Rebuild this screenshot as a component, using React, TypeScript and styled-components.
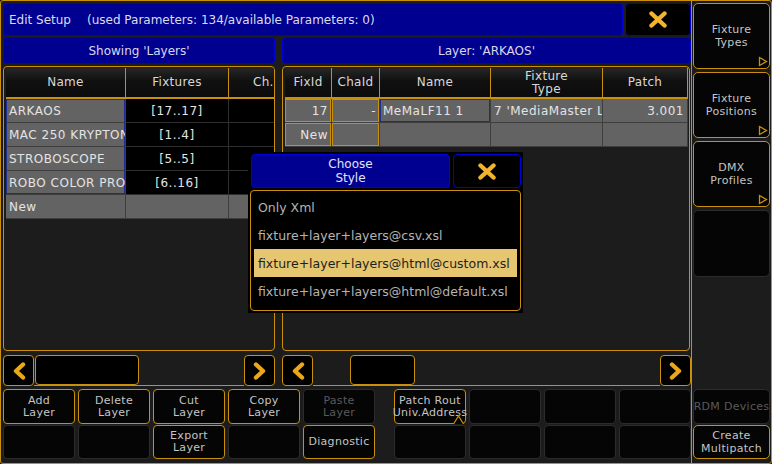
import React from 'react';
import styled, { createGlobalStyle } from 'styled-components';

const GOLD = '#c8900c';
const BLUE_BG = '#000090';
const BLUE_LINE = '#0000d8';

const GlobalStyle = createGlobalStyle`
  html, body {
    margin: 0;
    padding: 0;
    background: #1c1c1c;
  }
  body {
    font-family: "DejaVu Sans", "Liberation Sans", sans-serif;
  }
  * {
    box-sizing: border-box;
  }
`;

const Screen = styled.div`
  position: relative;
  width: 772px;
  height: 464px;
  border: 1px solid ${GOLD};
  border-radius: 3px;
  background: #1c1c1c;
  display: flex;
  overflow: hidden;
`;

const MainWindow = styled.div`
  position: relative;
  width: 691px;
  padding: 2px 0 0 2px;
  border-right: 1px solid ${GOLD};
  display: flex;
  flex-direction: column;
`;

// top title bar
const TopBar = styled.div`
  display: flex;
  gap: 2px;
  height: 33px;
  margin-bottom: 1px;
`;

const TitleBar = styled.div`
  flex: 1;
  display: flex;
  align-items: center;
  gap: 16px;
  padding-left: 5px;
  background: ${BLUE_BG};
  border: 1px solid ${BLUE_LINE};
  border-radius: 4px;
  color: #dcdcec;
  font-size: 12px;
`;

const CloseButton = styled.div<{ $w: number }>`
  width: ${(p) => p.$w}px;
  display: flex;
  align-items: center;
  justify-content: center;
  background: #000;
  border: 1px solid ${BLUE_LINE};
  border-radius: 4px;
`;

const Split = styled.div<{ $h: number; $mb: number }>`
  display: grid;
  grid-template-columns: 272px 1fr;
  column-gap: 7px;
  height: ${(p) => p.$h}px;
  margin-bottom: ${(p) => p.$mb}px;
`;

const SubHeader = styled.div`
  display: flex;
  align-items: center;
  justify-content: center;
  background: ${BLUE_BG};
  border: 1px solid ${BLUE_LINE};
  border-radius: 4px;
  color: #d8d8ec;
  font-size: 12px;
`;

const Panel = styled.div<{ $mr?: number }>`
  border: 1px solid ${GOLD};
  border-radius: 4px;
  padding: 1px 2px;
  margin-right: ${(p) => p.$mr || 0}px;
  overflow: hidden;
  background: #1c1c1c;
`;

const Table = styled.div<{ $cols: string }>`
  display: grid;
  grid-template-columns: ${(p) => p.$cols};
  grid-template-rows: 31px;
  grid-auto-rows: 24px;
  color: #e4e4e4;
  font-size: 12px;
  letter-spacing: 0.5px;
  white-space: nowrap;
`;

const HeadCell = styled.div<{ $align?: string }>`
  display: flex;
  align-items: center;
  justify-content: ${(p) => p.$align || 'center'};
  text-align: center;
  line-height: 13px;
  letter-spacing: 0.3px;
  padding: 0 4px;
  background: linear-gradient(#262626, #101010 45%, #0c0c0c);
  border-right: 1px solid ${GOLD};
  border-bottom: 2px solid ${GOLD};
  color: #d8d8d8;
  overflow: hidden;
`;

type Outline = 'none' | 'blueTop' | 'blueMid' | 'blueBottom' | 'blue' | 'gold';

const outlineShadow = (o: Outline) => {
  const b = '#1c2c98';
  switch (o) {
    case 'blueTop':
      return `inset 1px 0 ${b}, inset -1px 0 ${b}, inset 0 1px ${b}`;
    case 'blueMid':
      return `inset 1px 0 ${b}, inset -1px 0 ${b}`;
    case 'blueBottom':
      return `inset 1px 0 ${b}, inset -1px 0 ${b}, inset 0 -1px ${b}`;
    case 'blue':
      return `inset 0 0 0 1px #1c2c98`;
    case 'gold':
      return `inset 0 0 0 1px ${GOLD}`;
    default:
      return 'none';
  }
};

const Cell = styled.div<{ $gray?: boolean; $align?: string; $outline?: Outline }>`
  display: flex;
  align-items: center;
  justify-content: ${(p) => p.$align || 'flex-start'};
  padding: 0 3px;
  overflow: hidden;
  background: ${(p) => (p.$gray ? '#636363' : '#000')};
  border-right: 1px solid ${(p) => (p.$gray ? '#3e3e3e' : '#2e2e2e')};
  border-bottom: 1px solid ${(p) => (p.$gray ? '#3e3e3e' : '#2e2e2e')};
  box-shadow: ${(p) => outlineShadow(p.$outline || 'none')};
`;

// scrollbars
const ScrollBar = styled.div`
  display: flex;
  height: 31px;
`;

const ArrowBtn = styled.div`
  width: 31px;
  flex: none;
  display: flex;
  align-items: center;
  justify-content: center;
  background: #000;
  border: 1px solid ${GOLD};
  border-radius: 4px;
`;

const Track = styled.div`
  flex: 1;
  display: flex;
  border-bottom: 1px solid ${GOLD};
`;

const Thumb = styled.div<{ $offset: number; $w: number }>`
  margin-left: ${(p) => p.$offset}px;
  width: ${(p) => p.$w}px;
  background: #000;
  border: 1px solid ${GOLD};
  border-radius: 4px;
`;

// bottom buttons
const ButtonArea = styled.div`
  display: flex;
  justify-content: space-between;
  margin-top: 3px;
`;

const ButtonGrid = styled.div<{ $cols: number }>`
  display: grid;
  grid-template-columns: repeat(${(p) => p.$cols}, 72px);
  grid-template-rows: 35px 34px;
  column-gap: 3px;
  row-gap: 1px;
`;

type Variant = 'active' | 'empty' | 'disabled';

const ActionButton = styled.div<{ $variant: Variant }>`
  position: relative;
  display: flex;
  align-items: center;
  justify-content: center;
  text-align: center;
  white-space: pre;
  overflow: visible;
  line-height: 12px;
  font-size: 11px;
  letter-spacing: 0.3px;
  background: #050505;
  border-radius: 4px;
  border: 1px solid ${(p) => (p.$variant === 'active' ? GOLD : '#2c2c2c')};
  color: ${(p) => (p.$variant === 'disabled' ? '#5a5a5a' : '#c4c4c4')};
`;

// right column
const SideColumn = styled.div`
  width: 79px;
  padding: 2px 1px 4px 1px;
  display: flex;
  flex-direction: column;
  gap: 3px;
`;

const SideButton = styled(ActionButton)<{ $h: number }>`
  height: ${(p) => p.$h}px;
  flex: none;
  line-height: 13px;
  border-radius: 5px;
  overflow: hidden;
`;

const Spacer = styled.div`
  flex: 1;
`;

const Corner = styled.svg`
  position: absolute;
  right: 1px;
  bottom: 1px;
`;

const Caret = styled.svg`
  position: absolute;
  right: 1px;
  bottom: -1px;
`;

// popup
const Popup = styled.div`
  position: absolute;
  left: 247px;
  top: 151px;
  width: 275px;
  height: 161px;
  padding: 2px;
  background: #000;
  display: flex;
  flex-direction: column;
  gap: 2px;
  z-index: 5;
`;

const PopupHead = styled.div`
  display: flex;
  gap: 3px;
  height: 34px;
  padding-left: 1px;
`;

const PopupTitle = styled(SubHeader)`
  flex: 1;
  text-align: center;
  line-height: 14px;
  color: #e2e2ff;
`;

const List = styled.div`
  flex: 1;
  border: 1px solid ${GOLD};
  border-radius: 4px;
  padding: 2px 3px;
`;

const ListItem = styled.div<{ $selected?: boolean }>`
  height: 28px;
  display: flex;
  align-items: center;
  padding-left: 4px;
  font-size: 12.5px;
  white-space: nowrap;
  background: ${(p) => (p.$selected ? '#e6c670' : 'transparent')};
  color: ${(p) => (p.$selected ? '#1e1e1e' : '#b4b4b4')};
`;

const XIcon = () => (
  <svg width="20" height="17" viewBox="0 0 20 17">
    <path d="M3.5 2.5 L16.5 14.5 M16.5 2.5 L3.5 14.5" stroke="#f2b42c" strokeWidth="4.4" strokeLinecap="round" />
  </svg>
);

const Chevron = ({ dir }: { dir: 'left' | 'right' }) => (
  <svg width="14" height="18" viewBox="0 0 14 18">
    <polyline
      points={dir === 'left' ? '11,2.5 4,9 11,15.5' : '3,2.5 10,9 3,15.5'}
      fill="none"
      stroke="#eaa818"
      strokeWidth="4.4"
      strokeLinejoin="round"
      strokeLinecap="round"
    />
  </svg>
);

const CornerMark = () => (
  <Corner width="10" height="11" viewBox="0 0 10 11">
    <polygon points="1.5,1.5 8.5,5.5 1.5,9.5" fill="none" stroke={GOLD} strokeWidth="1.3" />
  </Corner>
);

const layers = [
  { name: 'ARKAOS', fixtures: '[17..17]' },
  { name: 'MAC 250 KRYPTON', fixtures: '[1..4]' },
  { name: 'STROBOSCOPE', fixtures: '[5..5]' },
  { name: 'ROBO COLOR PRO', fixtures: '[6..16]' },
];

const styles = [
  'Only Xml',
  'fixture+layer+layers@csv.xsl',
  'fixture+layer+layers@html@custom.xsl',
  'fixture+layer+layers@html@default.xsl',
];

type Btn = { label: string; variant: Variant; caret?: boolean };

const leftButtons: Btn[] = [
  { label: 'Add\nLayer', variant: 'active' },
  { label: 'Delete\nLayer', variant: 'active' },
  { label: 'Cut\nLayer', variant: 'active' },
  { label: 'Copy\nLayer', variant: 'active' },
  { label: 'Paste\nLayer', variant: 'disabled' },
  { label: '', variant: 'empty' },
  { label: '', variant: 'empty' },
  { label: 'Export\nLayer', variant: 'active' },
  { label: '', variant: 'empty' },
  { label: 'Diagnostic', variant: 'active' },
];

const rightButtons: Btn[] = [
  { label: 'Patch Rout\nUniv.Address', variant: 'active', caret: true },
  { label: '', variant: 'empty' },
  { label: '', variant: 'empty' },
  { label: '', variant: 'empty' },
  { label: '', variant: 'empty' },
  { label: '', variant: 'empty' },
  { label: '', variant: 'empty' },
  { label: '', variant: 'empty' },
];

const nameOutline = (i: number): Outline =>
  i === 0 ? 'blueTop' : i === layers.length - 1 ? 'blueBottom' : 'blueMid';

function renderButton(b: Btn, i: number) {
  return (
    <ActionButton key={i} $variant={b.variant}>
      {b.label}
      {b.caret && (
        <Caret width="11" height="9" viewBox="0 0 11 9">
          <polyline points="0.5,9 5.5,1 10.5,9" fill="#050505" stroke={GOLD} strokeWidth="1.2" />
        </Caret>
      )}
    </ActionButton>
  );
}

export default function App() {
  return (
    <>
      <GlobalStyle />
      <Screen>
        <MainWindow>
          <TopBar>
            <TitleBar>
              <span>Edit Setup</span>
              <span>(used Parameters: 134/available Parameters: 0)</span>
            </TitleBar>
            <CloseButton $w={66}>
              <XIcon />
            </CloseButton>
          </TopBar>

          <Split $h={27} $mb={2}>
            <SubHeader>Showing 'Layers'</SubHeader>
            <SubHeader>Layer: 'ARKAOS'</SubHeader>
          </Split>

          <Split $h={285} $mb={4}>
            <Panel>
              <Table $cols="120px 103px 80px">
                <HeadCell>Name</HeadCell>
                <HeadCell>Fixtures</HeadCell>
                <HeadCell $align="flex-start" style={{ paddingLeft: 24 }}>Ch.</HeadCell>
                {layers.map((l, i) => (
                  <React.Fragment key={l.name}>
                    <Cell $gray $outline={nameOutline(i)}>{l.name}</Cell>
                    <Cell $align="center">{l.fixtures}</Cell>
                    <Cell />
                  </React.Fragment>
                ))}
                <Cell $gray>New</Cell>
                <Cell $gray />
                <Cell $gray />
              </Table>
            </Panel>
            <Panel $mr={1}>
              <Table $cols="47px 48px 111px 112px 85px">
                <HeadCell>FixId</HeadCell>
                <HeadCell>ChaId</HeadCell>
                <HeadCell>Name</HeadCell>
                <HeadCell>
                  Fixture
                  <br />
                  Type
                </HeadCell>
                <HeadCell>Patch</HeadCell>
                <Cell $gray $align="flex-end" $outline="gold">17</Cell>
                <Cell $gray $align="flex-end" $outline="gold">-</Cell>
                <Cell $gray $outline="blue">MeMaLF11 1</Cell>
                <Cell $gray>7 'MediaMaster L</Cell>
                <Cell $gray $align="flex-end">3.001</Cell>
                <Cell $gray $align="flex-end" $outline="gold">New</Cell>
                <Cell $gray $outline="gold" />
                <Cell $gray />
                <Cell $gray />
                <Cell $gray />
              </Table>
            </Panel>
          </Split>

          <Split $h={31} $mb={0}>
            <ScrollBar>
              <ArrowBtn>
                <Chevron dir="left" />
              </ArrowBtn>
              <Track>
                <Thumb $offset={1} $w={104} />
              </Track>
              <ArrowBtn>
                <Chevron dir="right" />
              </ArrowBtn>
            </ScrollBar>
            <ScrollBar>
              <ArrowBtn>
                <Chevron dir="left" />
              </ArrowBtn>
              <Track>
                <Thumb $offset={37} $w={65} />
              </Track>
              <ArrowBtn>
                <Chevron dir="right" />
              </ArrowBtn>
            </ScrollBar>
          </Split>

          <ButtonArea>
            <ButtonGrid $cols={5}>{leftButtons.map(renderButton)}</ButtonGrid>
            <ButtonGrid $cols={4}>{rightButtons.map(renderButton)}</ButtonGrid>
          </ButtonArea>

          <Popup>
            <PopupHead>
              <PopupTitle>
                Choose
                <br />
                Style
              </PopupTitle>
              <CloseButton $w={68}>
                <XIcon />
              </CloseButton>
            </PopupHead>
            <List>
              {styles.map((s, i) => (
                <ListItem key={s} $selected={i === 2}>
                  {s}
                </ListItem>
              ))}
            </List>
          </Popup>
        </MainWindow>

        <SideColumn>
          <SideButton $variant="active" $h={66}>
            {'Fixture\nTypes'}
            <CornerMark />
          </SideButton>
          <SideButton $variant="active" $h={66}>
            {'Fixture\nPositions'}
            <CornerMark />
          </SideButton>
          <SideButton $variant="active" $h={66}>
            {'DMX\nProfiles'}
            <CornerMark />
          </SideButton>
          <SideButton $variant="empty" $h={67} />
          <Spacer />
          <SideButton $variant="disabled" $h={35}>
            RDM Devices
          </SideButton>
          <SideButton $variant="active" $h={34} style={{ marginTop: -2 }}>
            {'Create\nMultipatch'}
          </SideButton>
        </SideColumn>
      </Screen>
    </>
  );
}
